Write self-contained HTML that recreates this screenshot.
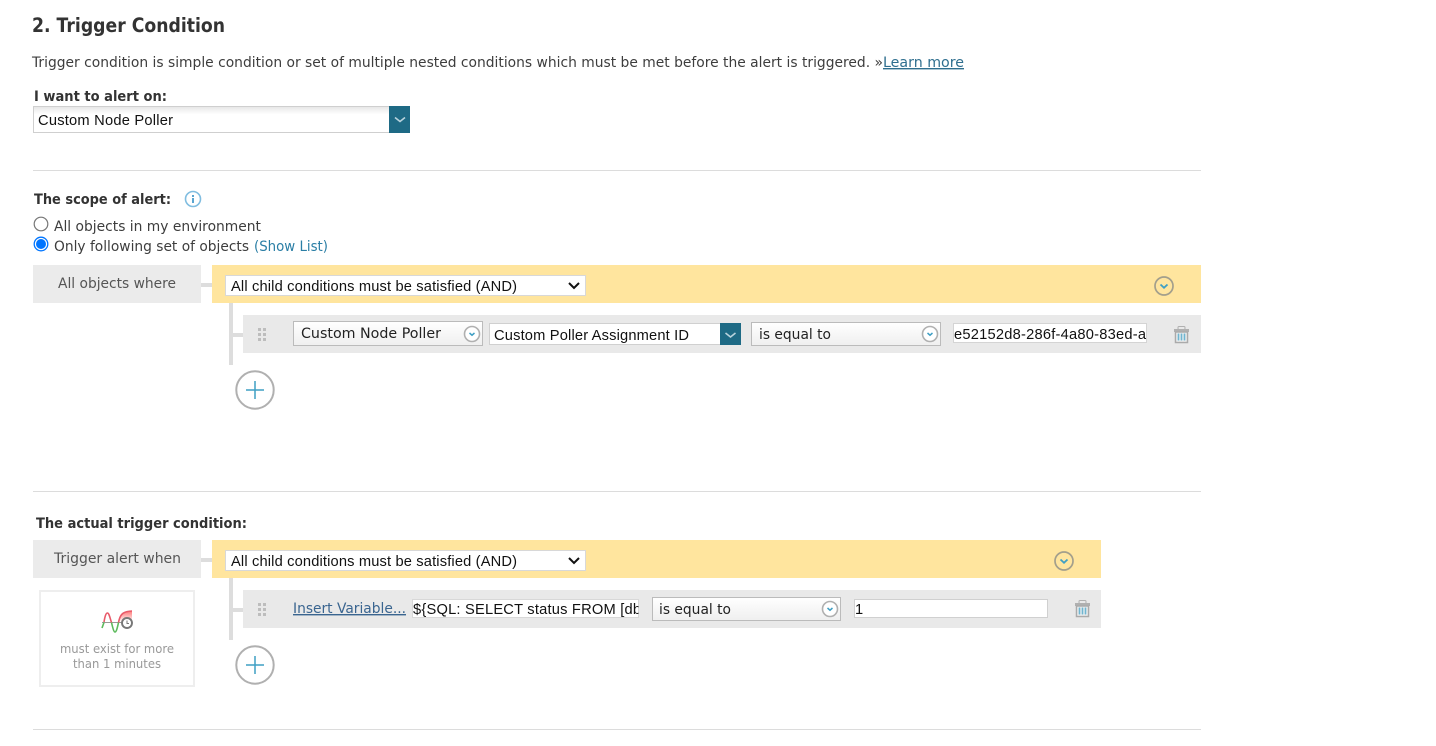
<!DOCTYPE html>
<html><head><meta charset="utf-8"><title>Trigger Condition</title>
<style>
html,body{margin:0;padding:0;background:#fff;width:1436px;height:746px;overflow:hidden}
svg{position:absolute;left:0;top:0;display:block}
.o{font-family:"DejaVu Sans","Liberation Sans",sans-serif;font-size:14px;fill:#3d3d3d}
.b{font-family:"DejaVu Sans","Liberation Sans",sans-serif;font-size:14px;font-weight:bold;fill:#333}
.a{font-family:"Liberation Sans",sans-serif;font-size:14.67px;fill:#111}
.s{font-family:"DejaVu Sans","Liberation Sans",sans-serif;font-size:12.4px;fill:#999}
</style></head><body>
<svg width="1436" height="746" viewBox="0 0 1436 746" xmlns="http://www.w3.org/2000/svg">
<defs>
<linearGradient id="g" x1="0" y1="0" x2="0" y2="1"><stop offset="0" stop-color="#fff"/><stop offset="1" stop-color="#efefef"/></linearGradient>
<linearGradient id="t" x1="0" y1="0" x2="0" y2="1"><stop offset="0" stop-color="#e6e6e6"/><stop offset=".3" stop-color="#fff"/></linearGradient>
<linearGradient id="rd" x1="0" y1="0" x2="0" y2="1"><stop offset="0" stop-color="#f77"/><stop offset="1" stop-color="#fff"/></linearGradient>
<clipPath id="c1"><rect x="413" y="599" width="225.500" height="19"/></clipPath>
<g id="ci"><circle r="7.500" fill="#fff" stroke="#b0b0b0" stroke-width="1.600"/><path d="M-2.500-1 0 1.200 2.500-1" fill="none" stroke="#3f9fc4" stroke-width="1.500"/></g>
<g id="cy"><circle r="9" fill="none" stroke="#a39f8c" stroke-width="1.700"/><path d="M-3.500-1.500 0 1.800 3.500-1.500" fill="none" stroke="#3f9fc4" stroke-width="1.800"/></g>
<g id="tr"><rect x="-3.500" y="-8.500" width="7" height="3" rx="1" fill="none" stroke="#b0b0b0"/><rect x="-7.500" y="-6" width="15" height="3" fill="#b0b0b0"/><rect x="-6" y="-3" width="12" height="10.500" fill="#f0f0f0" stroke="#aaa" stroke-width="1.500"/><path d="M-3-1.500V5.500M0-1.500V5.500M3-1.500V5.500" stroke="#6fb5d0" stroke-width="1.700"/></g>
<g id="pl"><circle r="18.700" fill="#fff" stroke="#b0b0b0" stroke-width="2"/><path d="M-9 0H9M0-9V9" stroke="#3f9fc4" stroke-width="1.500"/></g>
<g id="dr" fill="#bdbdbd"><rect x="0" y="0" width="3" height="3"/><rect x="5" y="0" width="3" height="3"/><rect x="0" y="5" width="3" height="3"/><rect x="5" y="5" width="3" height="3"/><rect x="0" y="10" width="3" height="3"/><rect x="5" y="10" width="3" height="3"/></g>
</defs>

<text x="32" y="32" font-family="DejaVu Sans,sans-serif" font-size="19.500" font-weight="bold" fill="#333" textLength="193" lengthAdjust="spacingAndGlyphs">2. Trigger Condition</text>
<text class="o" x="32" y="67" textLength="851" lengthAdjust="spacingAndGlyphs">Trigger condition is simple condition or set of multiple nested conditions which must be met before the alert is triggered. »</text>
<text class="o" x="883" y="67" textLength="81" lengthAdjust="spacingAndGlyphs" style="fill:#2f6f8f" text-decoration="underline">Learn more</text>

<text class="b" x="34" y="101" textLength="133" lengthAdjust="spacingAndGlyphs">I want to alert on:</text>
<rect x="33.500" y="106.500" width="356" height="26" fill="url(#t)" stroke="#cfcfcf"/>
<text class="a" x="38" y="125" textLength="135">Custom Node Poller</text>
<rect x="389" y="106" width="21" height="27" fill="#1e6a85"/>
<path d="M395 117.500 400 121.500 405 117.500" fill="none" stroke="#b9d3dd" stroke-width="1.600"/>

<rect x="33" y="170" width="1168" height="1" fill="#dcdcdc"/>

<text class="b" x="34" y="204" textLength="137" lengthAdjust="spacingAndGlyphs">The scope of alert:</text>
<circle cx="193" cy="199" r="7.500" fill="#fff" stroke="#80bde0" stroke-width="1.600"/>
<rect x="192" y="198" width="2" height="5" fill="#5aa5d0"/><rect x="192" y="195" width="2" height="2" fill="#5aa5d0"/>

<circle cx="41" cy="224" r="6.800" fill="#fff" stroke="#767676" stroke-width="1.200"/>
<text class="o" x="54" y="231" textLength="207" lengthAdjust="spacingAndGlyphs">All objects in my environment</text>
<circle cx="41" cy="244" r="6.800" fill="#fff" stroke="#0075ff" stroke-width="1.300"/>
<circle cx="41" cy="244" r="5" fill="#0075ff"/>
<text class="o" x="54" y="251" textLength="195" lengthAdjust="spacingAndGlyphs">Only following set of objects</text>
<text class="o" x="254" y="251" textLength="74" lengthAdjust="spacingAndGlyphs" style="fill:#2a7ea5">(Show List)</text>

<rect x="33" y="265" width="168" height="38" fill="#ebebeb"/>
<text class="o" x="58" y="288" textLength="118" lengthAdjust="spacingAndGlyphs" style="fill:#555">All objects where</text>
<rect x="201" y="283" width="11" height="4" fill="#ddd"/>
<rect x="212" y="265" width="989" height="38" fill="#ffe59e"/>
<rect x="225.500" y="275.500" width="360" height="20" fill="#fff" stroke="#d8d8d8"/>
<text class="a" x="231" y="291" textLength="286">All child conditions must be satisfied (AND)</text>
<path d="M569 283 574 288 579 283" fill="none" stroke="#111" stroke-width="2"/>
<use href="#cy" x="1164" y="286"/>

<rect x="229" y="303" width="4" height="62" fill="#ddd"/>
<rect x="233" y="333" width="10" height="4" fill="#ddd"/>
<rect x="243" y="315" width="958" height="38" fill="#e9e9e9"/>
<use href="#dr" x="258" y="328"/>
<rect x="293.500" y="321.500" width="189" height="24" fill="url(#g)" stroke="#bbb"/>
<text class="o" x="301" y="338" textLength="140" lengthAdjust="spacingAndGlyphs" style="fill:#222">Custom Node Poller</text>
<use href="#ci" x="472" y="334"/>
<rect x="489.500" y="323.500" width="231" height="21" fill="#fff" stroke="#d0d0d0"/>
<text class="a" x="494" y="340" textLength="195">Custom Poller Assignment ID</text>
<rect x="720" y="323" width="21" height="22" fill="#1e6a85"/>
<path d="M725.500 333 730.500 337 735.500 333" fill="none" stroke="#b9d3dd" stroke-width="1.600"/>
<rect x="751.500" y="322.500" width="189" height="23" fill="url(#g)" stroke="#bbb"/>
<text class="o" x="759" y="339" textLength="72" lengthAdjust="spacingAndGlyphs" style="fill:#222">is equal to</text>
<use href="#ci" x="930" y="334"/>
<rect x="953.500" y="323.500" width="193" height="19" fill="#fff" stroke="#d4d4d4"/>
<text class="a" x="954" y="339" textLength="192">e52152d8-286f-4a80-83ed-a</text>
<use href="#tr" x="1181.500" y="335"/>
<use href="#pl" x="255" y="390"/>

<rect x="33" y="491" width="1168" height="1" fill="#dcdcdc"/>

<text class="b" x="36" y="528" textLength="211" lengthAdjust="spacingAndGlyphs">The actual trigger condition:</text>
<rect x="33" y="540" width="168" height="38" fill="#ebebeb"/>
<text class="o" x="54" y="563" textLength="127" lengthAdjust="spacingAndGlyphs" style="fill:#555">Trigger alert when</text>
<rect x="201" y="558" width="11" height="4" fill="#ddd"/>
<rect x="212" y="540" width="889" height="38" fill="#ffe59e"/>
<rect x="225.500" y="550.500" width="360" height="20" fill="#fff" stroke="#d8d8d8"/>
<text class="a" x="231" y="566" textLength="286">All child conditions must be satisfied (AND)</text>
<path d="M569 558 574 563 579 558" fill="none" stroke="#111" stroke-width="2"/>
<use href="#cy" x="1064" y="561"/>

<rect x="229" y="578" width="4" height="62" fill="#ddd"/>
<rect x="233" y="608" width="10" height="4" fill="#ddd"/>
<rect x="243" y="590" width="858" height="38" fill="#e9e9e9"/>
<use href="#dr" x="258" y="603"/>
<text class="o" x="293" y="613" textLength="113" lengthAdjust="spacingAndGlyphs" style="fill:#3a6590" text-decoration="underline">Insert Variable...</text>
<rect x="412.500" y="599.500" width="226" height="18" fill="#fff" stroke="#d8d8d8"/>
<text class="a" x="413" y="614" clip-path="url(#c1)" textLength="228">${SQL: SELECT status FROM [db</text>
<rect x="652.500" y="597.500" width="188" height="23" fill="url(#g)" stroke="#bbb"/>
<text class="o" x="659" y="614" textLength="72" lengthAdjust="spacingAndGlyphs" style="fill:#222">is equal to</text>
<use href="#ci" x="830" y="609"/>
<rect x="854.500" y="599.500" width="193" height="18" fill="#fff" stroke="#d0d0d0"/>
<text class="a" x="855" y="614">1</text>
<use href="#tr" x="1082.500" y="609"/>
<use href="#pl" x="255" y="665"/>

<rect x="40" y="591" width="154" height="95" fill="#fff" stroke="#eee" stroke-width="2"/>
<path d="M118.500 622C120 615 122 611.500 132 611V622Z" fill="url(#rd)"/>
<path d="M102 622.500H122" stroke="#999" stroke-width="1"/>
<path d="M104 622C105 616 106 613 107.500 613C109 613 110 618 111.500 622.500M118.500 622.500C120 615 122 611.500 132 611" fill="none" stroke="#e85a6a" stroke-width="1.600"/>
<path d="M102 628 104 622.500M111.500 622.500C113 629 114 632 115 632C116.500 632 117.500 627 118.500 622.500" fill="none" stroke="#5cba5c" stroke-width="1.600"/>
<circle cx="127" cy="623" r="5" fill="#fff" stroke="#777" stroke-width="1.900"/>
<path d="M127 620.500V623.500H129" fill="none" stroke="#777"/>
<text class="s" x="60" y="653" textLength="114" lengthAdjust="spacingAndGlyphs">must exist for more</text>
<text class="s" x="73" y="668" textLength="88" lengthAdjust="spacingAndGlyphs">than 1 minutes</text>

<rect x="33" y="729" width="1168" height="1" fill="#dcdcdc"/>
</svg>
</body></html>
